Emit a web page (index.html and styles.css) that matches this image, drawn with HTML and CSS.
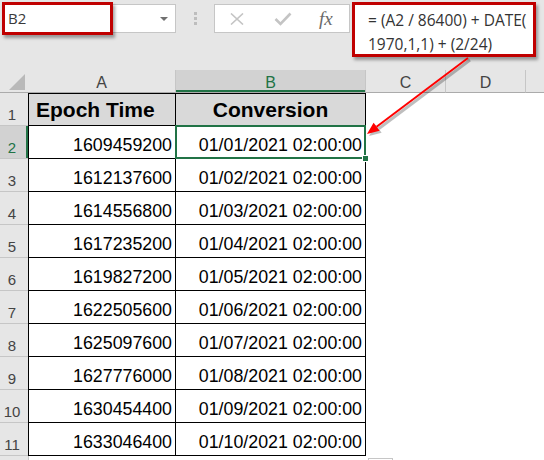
FILE: index.html
```html
<!DOCTYPE html>
<html lang="en">
<head>
    <meta charset="UTF-8">
    <title>Epoch Time Conversion</title>
    <link rel="stylesheet" href="styles.css">
</head>
<body>
    <!-- Formula bar -->
    <div class="toolbar">
        <div class="namebox">
            <span class="namebox-text">B2</span>
            <span class="caret"></span>
        </div>
        <div class="dots"><i></i><i></i><i></i></div>
        <div class="fbuttons">
            <svg class="icon-x" width="16" height="12" viewBox="0 0 16 12">
                <path d="M2 0.5 L14 11.5 M14 0.5 L2 11.5" stroke="#c4c4c4" stroke-width="1.6" fill="none"/>
            </svg>
            <svg class="icon-check" width="18" height="14" viewBox="0 0 18 14">
                <path d="M1.5 7 L6.5 12 L16.5 1.5" stroke="#c4c4c4" stroke-width="2.6" fill="none"/>
            </svg>
            <span class="fx">fx</span>
        </div>
        <div class="formula">= (A2 / 86400) + DATE(<br>1970,1,1) + (2/24)</div>
    </div>

    <!-- Sheet -->
    <div class="sheet" id="sheet">
        <div class="corner"><span class="tri"></span></div>
        <div class="colhead">A</div>
        <div class="colhead selected">B</div>
        <div class="colhead">C</div>
        <div class="colhead">D</div>
        <div class="colhead rest"></div>
    </div>

    <!-- Annotation arrow -->
    <svg class="arrow" width="544" height="460" viewBox="0 0 544 460">
        <g opacity="0.25" transform="translate(2,2)">
            <line x1="468" y1="58" x2="376.6" y2="126.7" stroke="#000" stroke-width="3"/>
            <polygon points="367,134 379.6,130.7 373.6,122.7" fill="#000"/>
        </g>
        <line x1="468" y1="58" x2="376.6" y2="126.7" stroke="#ff0000" stroke-width="2"/>
        <polygon points="367,134 379.6,130.7 373.6,122.7" fill="#ff0000"/>
    </svg>

    <div class="quick"></div>

    <script>
    const rows = [
        ['1609459200', '01/01/2021 02:00:00'],
        ['1612137600', '01/02/2021 02:00:00'],
        ['1614556800', '01/03/2021 02:00:00'],
        ['1617235200', '01/04/2021 02:00:00'],
        ['1619827200', '01/05/2021 02:00:00'],
        ['1622505600', '01/06/2021 02:00:00'],
        ['1625097600', '01/07/2021 02:00:00'],
        ['1627776000', '01/08/2021 02:00:00'],
        ['1630454400', '01/09/2021 02:00:00'],
        ['1633046400', '01/10/2021 02:00:00']
    ];

    const sheet = document.getElementById('sheet');

    function addRow(num, a, b, kind) {
        let html = `<div class="rowhead${num === 2 ? ' selected' : ''}">${num}</div>`;
        html += `<div class="cell colA ${kind}">${a}</div>`;
        html += `<div class="cell colB ${kind}${num === 2 ? ' sel' : ''}">${b}</div>`;
        html += `<div class="cell plain"></div><div class="cell plain"></div><div class="cell plain"></div>`;
        sheet.insertAdjacentHTML('beforeend', html);
    }

    addRow(1, 'Epoch Time', 'Conversion', 'head');
    rows.forEach((r, i) => addRow(i + 2, r[0], r[1], 'data'));
    // partial row 12 at the bottom edge, label scrolled out of view
    addRow('', '', '', 'empty');
    </script>
</body>
</html>
```

FILE: styles.css
```css
/* General */
body {
    margin: 0;
    width: 544px;
    height: 460px;
    overflow: hidden;
    position: relative;
    background: #ffffff;
    font-family: "Liberation Sans", Arial, sans-serif;
}

/* Formula bar */
.toolbar {
    display: flex;
    align-items: flex-start;
    height: 70px;
    padding-top: 4px;
    box-sizing: border-box;
    background: #e6e6e6;
}

.namebox {
    position: relative;
    margin-left: 2px;
    width: 174px;
    height: 29px;
    box-sizing: border-box;
    background: #fff;
    border: 1px solid #c6c6c6;
    font-family: "Open Sans", sans-serif;
    font-size: 15px;
    line-height: 27px;
    color: #3a3a3a;
}

.namebox-text {
    padding-left: 5px;
}

.namebox::after {
    content: "";
    position: absolute;
    left: -1px;
    top: -3px;
    width: 111px;
    height: 33px;
    box-sizing: border-box;
    border: 3px solid #c00000;
    box-shadow: 2px 3px 3px rgba(0, 0, 0, 0.35);
}

.caret {
    position: absolute;
    right: 7px;
    top: 12px;
    border-left: 4px solid transparent;
    border-right: 4px solid transparent;
    border-top: 4px solid #707070;
}

.dots {
    display: flex;
    flex-direction: column;
    gap: 2px;
    margin: 8px 0 0 18px;
}

.dots i {
    display: block;
    width: 3px;
    height: 3px;
    background: #bdbdbd;
}

.fbuttons {
    display: flex;
    align-items: center;
    margin-left: 17px;
    width: 136px;
    height: 29px;
    box-sizing: border-box;
    background: #fff;
    border: 1px solid #c6c6c6;
}

.icon-x {
    margin-left: 14px;
}

.icon-check {
    margin-left: 29px;
}

.fx {
    margin-left: 27px;
    font-family: "Liberation Serif", serif;
    font-style: italic;
    font-size: 19px;
    color: #6a6a6a;
}

.formula {
    margin: -2px 0 0 2px;
    width: 184px;
    height: 55px;
    box-sizing: border-box;
    padding: 3px 0 0 13px;
    background: #fff;
    border: 3px solid #c00000;
    box-shadow: 2px 3px 3px rgba(0, 0, 0, 0.35);
    font-family: "Open Sans", sans-serif;
    font-size: 15.5px;
    line-height: 24px;
    color: #333;
    white-space: nowrap;
}

/* Sheet grid */
.sheet {
    display: grid;
    grid-template-columns: 28px 148px 190px 80px 80px 1fr;
    grid-template-rows: 23px repeat(12, 33px);
    height: 390px;
    overflow: hidden;
}

.corner {
    position: relative;
    background: #e6e6e6;
    border-bottom: 1px solid #ababab;
}

.corner .tri {
    position: absolute;
    right: 3px;
    bottom: 2px;
    width: 0;
    height: 0;
    border-left: 16px solid transparent;
    border-bottom: 16px solid #b9b9b9;
}

.colhead {
    background: #e6e6e6;
    border-right: 1px solid #c6c6c6;
    border-bottom: 1px solid #ababab;
    text-align: center;
    font-size: 16px;
    line-height: 21px;
    padding-top: 2px;
    box-sizing: border-box;
    color: #444;
}

.colhead.rest {
    border-right: none;
}

.colhead.selected {
    background: #d2d2d2;
    color: #217346;
    box-shadow: inset 0 -2px 0 #217346;
}

.rowhead {
    display: flex;
    align-items: flex-end;
    justify-content: center;
    padding: 0 4px 1px 0;
    box-sizing: border-box;
    background: #e6e6e6;
    border-bottom: 1px solid #c6c6c6;
    font-size: 15px;
    line-height: 18px;
    color: #444;
}

.rowhead.selected {
    background: #d2d2d2;
    color: #217346;
    box-shadow: inset -2px 0 0 #217346;
}

/* Cells */
.cell {
    display: flex;
    align-items: flex-end;
    box-sizing: border-box;
    white-space: nowrap;
}

.cell.head,
.cell.data {
    border-right: 1px solid #000;
    border-bottom: 1px solid #000;
}

.cell.colA.head,
.cell.colA.data {
    border-left: 1px solid #000;
}

.cell.colA.empty {
    border-left: 1px solid #c6c6c6;
}

.cell.head {
    border-top: 1px solid #000;
    background: #d9d9d9;
    font-weight: bold;
    font-size: 21px;
    line-height: 24px;
    padding-bottom: 3px;
}

.cell.colA.head {
    padding-left: 7px;
}

.cell.colB.head {
    justify-content: center;
}

.cell.data {
    justify-content: flex-end;
    font-size: 17.8px;
    line-height: 20px;
    padding: 0 3px 3px 0;
    color: #000;
}

.cell.sel {
    position: relative;
}

.cell.sel::after {
    content: "";
    position: absolute;
    left: -1px;
    top: -1px;
    right: -1px;
    bottom: -1px;
    border: 2px solid #217346;
}

.cell.sel::before {
    content: "";
    position: absolute;
    right: -4px;
    bottom: -4px;
    width: 5px;
    height: 5px;
    background: #217346;
    border: 1px solid #fff;
    z-index: 2;
}

/* Overlays */
.arrow {
    position: absolute;
    left: 0;
    top: 0;
    pointer-events: none;
}

.quick {
    position: absolute;
    left: 368px;
    top: 458px;
    width: 23px;
    height: 10px;
    border: 1px solid #c6c6c6;
    background: #fff;
}
```
